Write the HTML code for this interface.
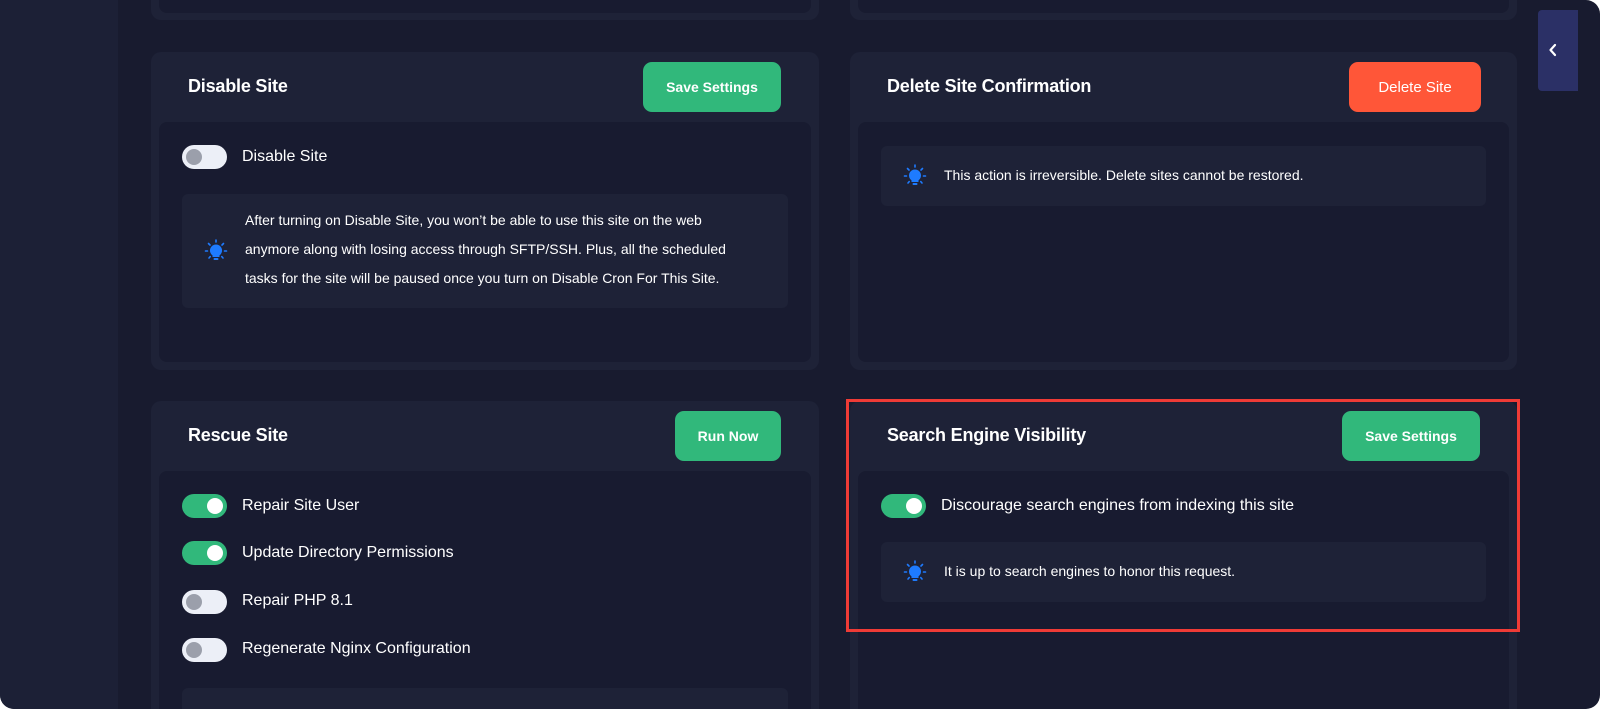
<!DOCTYPE html>
<html><head><meta charset="utf-8"><style>
*{box-sizing:border-box;margin:0;padding:0}
html,body{width:1600px;height:709px;overflow:hidden;background:#fff;font-family:"Liberation Sans",sans-serif;color:#fff}
.win{position:absolute;left:0;top:0;width:1600px;height:709px;background:#181b2f;border-radius:0 14px 14px 14px;overflow:hidden}
.side{position:absolute;left:0;top:0;width:118px;height:709px;background:#1c2036}
.card{position:absolute;background:#1e2237;border-radius:10px;overflow:hidden}
.body{position:absolute;left:8px;right:8px;background:#181b30;border-radius:8px}
.title{position:absolute;left:37px;font-size:18px;font-weight:bold;letter-spacing:-0.2px}
.btn{position:absolute;height:50px;border-radius:9px;background:#31b87b;font-size:14px;font-weight:bold;display:flex;align-items:center;justify-content:center}
.tog{position:absolute;width:45px;height:24px;border-radius:12px;background:#eceff7}
.tog::after{content:"";position:absolute;left:4px;top:4px;width:16px;height:16px;border-radius:50%;background:#9b9fab}
.tog.on{background:#31b87b}
.tog.on::after{left:auto;right:4px;background:#fff}
.lbl{position:absolute;font-size:16px}
.note{position:absolute;background:#1e2237;border-radius:6px}
.ntext{position:absolute;font-size:14px;line-height:29px}
.bulb{position:absolute;width:24px;height:24px}
</style></head><body>
<div class="win">
<div class="side"></div>
<div class="card" style="left:151px;top:-30px;width:668px;height:50px"><div class="body" style="top:0;bottom:7px"></div></div>
<div class="card" style="left:850px;top:-30px;width:667px;height:50px"><div class="body" style="top:0;bottom:7px"></div></div>

<div class="card" style="left:151px;top:52px;width:668px;height:318px">
 <div class="title" style="top:24px">Disable Site</div>
 <div class="btn" style="left:492px;top:10px;width:138px">Save Settings</div>
 <div class="body" style="top:70px;bottom:8px">
  <div class="tog" style="left:23px;top:23px"></div>
  <div class="lbl" style="left:83px;top:26px">Disable Site</div>
  <div class="note" style="left:23px;top:72px;width:606px;height:114px">
   <svg class="bulb" style="left:22px;top:45px" viewBox="0 0 24 24"><g stroke="#1e7bff" stroke-width="1.6" stroke-linecap="round"><line x1="12" y1="1" x2="12" y2="3"/><line x1="4.5" y1="4.5" x2="6" y2="6"/><line x1="19.5" y1="4.5" x2="18" y2="6"/><line x1="1.5" y1="12" x2="3.5" y2="12"/><line x1="20.5" y1="12" x2="22.5" y2="12"/><line x1="5" y1="19" x2="6.2" y2="17.6"/><line x1="19" y1="19" x2="17.8" y2="17.6"/></g><path d="M12 5.5a6 6 0 0 0-3.5 10.9V18h7v-1.6A6 6 0 0 0 12 5.5z" fill="#1e7bff"/><rect x="9.5" y="19" width="5" height="2" rx="1" fill="#1e7bff"/></svg>
   <div class="ntext" style="left:63px;top:12px;width:525px">After turning on Disable Site, you won’t be able to use this site on the web<br>anymore along with losing access through SFTP/SSH. Plus, all the scheduled<br>tasks for the site will be paused once you turn on Disable Cron For This Site.</div>
  </div>
 </div>
</div>

<div class="card" style="left:850px;top:52px;width:667px;height:318px">
 <div class="title" style="top:24px">Delete Site Confirmation</div>
 <div class="btn" style="left:499px;top:10px;width:132px;background:#ff5638;font-weight:normal;font-size:15px">Delete Site</div>
 <div class="body" style="top:70px;bottom:8px">
  <div class="note" style="left:23px;top:24px;width:605px;height:60px">
   <svg class="bulb" style="left:22px;top:18px" viewBox="0 0 24 24"><g stroke="#1e7bff" stroke-width="1.6" stroke-linecap="round"><line x1="12" y1="1" x2="12" y2="3"/><line x1="4.5" y1="4.5" x2="6" y2="6"/><line x1="19.5" y1="4.5" x2="18" y2="6"/><line x1="1.5" y1="12" x2="3.5" y2="12"/><line x1="20.5" y1="12" x2="22.5" y2="12"/><line x1="5" y1="19" x2="6.2" y2="17.6"/><line x1="19" y1="19" x2="17.8" y2="17.6"/></g><path d="M12 5.5a6 6 0 0 0-3.5 10.9V18h7v-1.6A6 6 0 0 0 12 5.5z" fill="#1e7bff"/><rect x="9.5" y="19" width="5" height="2" rx="1" fill="#1e7bff"/></svg>
   <div class="ntext" style="left:63px;top:15px">This action is irreversible. Delete sites cannot be restored.</div>
  </div>
 </div>
</div>

<div class="card" style="left:151px;top:401px;width:668px;height:308px;border-radius:10px 10px 0 0">
 <div class="title" style="top:24px">Rescue Site</div>
 <div class="btn" style="left:524px;top:10px;width:106px">Run Now</div>
 <div class="body" style="top:70px;bottom:0;border-radius:8px 8px 0 0">
  <div class="tog on" style="left:23px;top:23px"></div>
  <div class="lbl" style="left:83px;top:26px">Repair Site User</div>
  <div class="tog on" style="left:23px;top:70px"></div>
  <div class="lbl" style="left:83px;top:73px">Update Directory Permissions</div>
  <div class="tog" style="left:23px;top:119px"></div>
  <div class="lbl" style="left:83px;top:121px">Repair PHP 8.1</div>
  <div class="tog" style="left:23px;top:167px"></div>
  <div class="lbl" style="left:83px;top:169px">Regenerate Nginx Configuration</div>
  <div class="note" style="left:23px;top:217px;width:606px;height:21px;border-radius:6px 6px 0 0"></div>
 </div>
</div>

<div class="card" style="left:850px;top:401px;width:667px;height:308px;border-radius:10px 10px 0 0">
 <div class="title" style="top:24px">Search Engine Visibility</div>
 <div class="btn" style="left:492px;top:10px;width:138px">Save Settings</div>
 <div class="body" style="top:70px;bottom:0;border-radius:8px 8px 0 0">
  <div class="tog on" style="left:23px;top:23px"></div>
  <div class="lbl" style="left:83px;top:26px">Discourage search engines from indexing this site</div>
  <div class="note" style="left:23px;top:71px;width:605px;height:60px">
   <svg class="bulb" style="left:22px;top:18px" viewBox="0 0 24 24"><g stroke="#1e7bff" stroke-width="1.6" stroke-linecap="round"><line x1="12" y1="1" x2="12" y2="3"/><line x1="4.5" y1="4.5" x2="6" y2="6"/><line x1="19.5" y1="4.5" x2="18" y2="6"/><line x1="1.5" y1="12" x2="3.5" y2="12"/><line x1="20.5" y1="12" x2="22.5" y2="12"/><line x1="5" y1="19" x2="6.2" y2="17.6"/><line x1="19" y1="19" x2="17.8" y2="17.6"/></g><path d="M12 5.5a6 6 0 0 0-3.5 10.9V18h7v-1.6A6 6 0 0 0 12 5.5z" fill="#1e7bff"/><rect x="9.5" y="19" width="5" height="2" rx="1" fill="#1e7bff"/></svg>
   <div class="ntext" style="left:63px;top:15px">It is up to search engines to honor this request.</div>
  </div>
 </div>
</div>
<div style="position:absolute;left:846px;top:399px;width:674px;height:233px;border:3px solid #ef3b36"></div>

<div style="position:absolute;left:1538px;top:10px;width:40px;height:81px;background:#2b3066;border-radius:4px 0 0 4px">
 <svg style="position:absolute;left:10px;top:33px" width="10" height="14" viewBox="0 0 10 14"><path d="M7 2L2.5 7L7 12" stroke="#fff" stroke-width="2.2" fill="none" stroke-linecap="round" stroke-linejoin="round"/></svg>
</div>
</div>
</body></html>
